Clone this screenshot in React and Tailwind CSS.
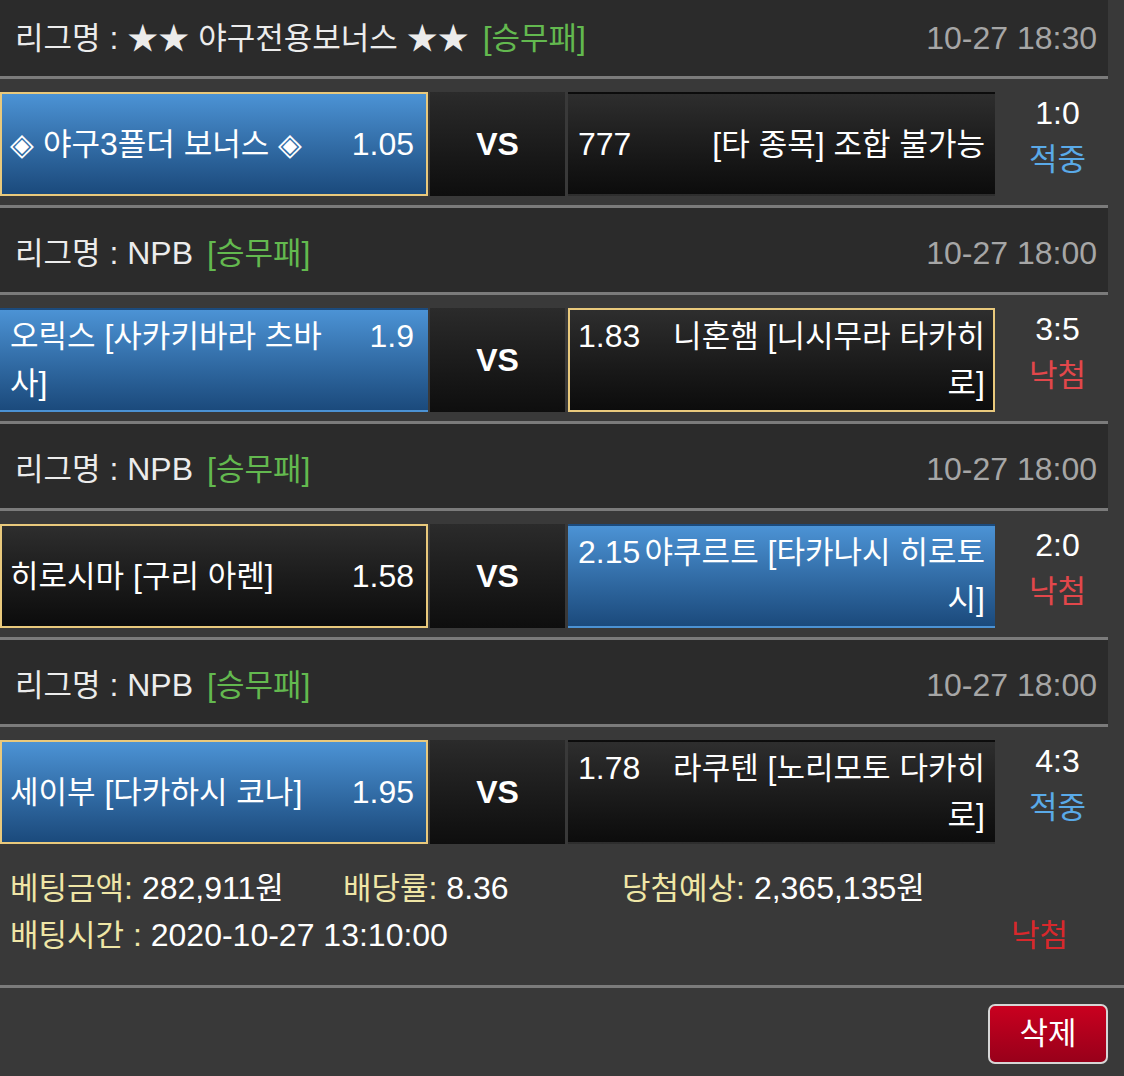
import React from "react";

// hangul runs get a slightly smaller size than the latin text around them
function T({ children }) {
  const parts = String(children).split(/([\uAC00-\uD7A3\u3131-\u318E★◈]+)/);
  return parts.map((p, i) =>
    i % 2 ? (
      <span key={i} className="text-[31px]">
        {p}
      </span>
    ) : (
      p
    )
  );
}

const games = [
  {
    league: "★★ 야구전용보너스 ★★",
    time: "10-27 18:30",
    home: { name: "◈ 야구3폴더 보너스 ◈", odds: "1.05", blue: true, picked: true },
    away: { name: "[타 종목] 조합 불가능", odds: "777", blue: false, picked: false },
    score: "1:0",
    result: "적중",
    first: true,
  },
  {
    league: "NPB",
    time: "10-27 18:00",
    home: { name: "오릭스 [사카키바라 츠바사]", odds: "1.9", blue: true, picked: false },
    away: { name: "니혼햄 [니시무라 타카히로]", odds: "1.83", blue: false, picked: true },
    score: "3:5",
    result: "낙첨",
  },
  {
    league: "NPB",
    time: "10-27 18:00",
    home: { name: "히로시마 [구리 아렌]", odds: "1.58", blue: false, picked: true },
    away: { name: "야쿠르트 [타카나시 히로토시]", odds: "2.15", blue: true, picked: false },
    score: "2:0",
    result: "낙첨",
  },
  {
    league: "NPB",
    time: "10-27 18:00",
    home: { name: "세이부 [다카하시 코나]", odds: "1.95", blue: true, picked: true },
    away: { name: "라쿠텐 [노리모토 다카히로]", odds: "1.78", blue: false, picked: false },
    score: "4:3",
    result: "적중",
  },
];

function boxClass(team) {
  return [
    "h-[104px] border-2 flex items-center",
    team.blue
      ? "bg-linear-to-b from-[#4c93d5] to-[#1b4a7c]"
      : "bg-linear-to-b from-[#2e2e2e] to-[#0c0c0c]",
    team.picked ? "border-[#e9c97c]" : "border-transparent",
  ].join(" ");
}

function Sep() {
  return <div className="h-[3px] bg-[#7b7b7b]" />;
}

function Game({ g, last }) {
  return (
    <div className="w-[1108px]">
      <div
        className={`${g.first ? "h-[76px]" : "h-[84px] pt-[6px]"} bg-[#2b2b2b] flex items-center justify-between pl-[15px] pr-[11px]`}
      >
        <div className="text-[#ececec]">
          <T>{`리그명 : ${g.league}`}</T>
          <span className="ml-[14px] text-[#63b94f]">
            <T>[승무패]</T>
          </span>
        </div>
        <div className="text-[#a6a6a6]">{g.time}</div>
      </div>
      <Sep />
      <div className="flex pt-[13px] pb-[9px]">
        <div className={`${boxClass(g.home)} w-[428px] pl-[8px] pr-[12px]`}>
          <div className="flex w-full items-start gap-[20px]">
            <div className="flex-1 min-w-0">
              <T>{g.home.name}</T>
            </div>
            <div className="shrink-0">{g.home.odds}</div>
          </div>
        </div>
        <div className="ml-[2px] w-[135px] h-[104px] bg-linear-to-b from-[#2b2b2b] to-[#0e0e0e] flex items-center justify-center font-bold">
          VS
        </div>
        <div className={`${boxClass(g.away)} ml-[3px] w-[427px] pl-[8px] pr-[8px]`}>
          <div className="flex w-full items-start">
            <div className="shrink-0">{g.away.odds}</div>
            <div className="flex-1 min-w-0 text-right">
              <T>{g.away.name}</T>
            </div>
          </div>
        </div>
        <div className="flex-1 flex flex-col items-center -mt-[2px] pl-[12px]">
          <div>{g.score}</div>
          <div className={g.result === "적중" ? "text-[#5aaae8]" : "text-[#e2474b]"}>
            <T>{g.result}</T>
          </div>
        </div>
      </div>
      {!last && <Sep />}
    </div>
  );
}

export default function App() {
  return (
    <div
      className="w-[1124px] h-[1076px] overflow-hidden bg-[#393939] text-white text-[32px] leading-[46px]"
      style={{ fontFamily: '"Liberation Sans", "Noto Sans CJK KR", sans-serif' }}
    >
      {games.map((g, i) => (
        <Game key={i} g={g} last={i === games.length - 1} />
      ))}

      <div className="pt-[12px] pb-[26px] pl-[10px] pr-[56px]">
        <div className="flex">
          <div className="w-[333px]">
            <span className="text-[#efe6a6]">
              <T>베팅금액:</T>
            </span>{" "}
            282,911<T>원</T>
          </div>
          <div className="w-[279px]">
            <span className="text-[#efe6a6]">
              <T>배당률:</T>
            </span>{" "}
            8.36
          </div>
          <div>
            <span className="text-[#efe6a6]">
              <T>당첨예상:</T>
            </span>{" "}
            2,365,135<T>원</T>
          </div>
        </div>
        <div className="flex justify-between">
          <div>
            <span className="text-[#efe6a6]">
              <T>배팅시간 :</T>
            </span>{" "}
            2020-10-27 13:10:00
          </div>
          <div className="text-[#d8282c]">
            <T>낙첨</T>
          </div>
        </div>
      </div>
      <Sep />
      <div className="flex justify-end pt-[16px] pr-[16px]">
        <button className="w-[120px] h-[60px] rounded-[7px] border-2 border-[#d6d6d6] bg-linear-to-b from-[#c9001f] to-[#98001a] text-white flex items-center justify-center">
          <T>삭제</T>
        </button>
      </div>
    </div>
  );
}
